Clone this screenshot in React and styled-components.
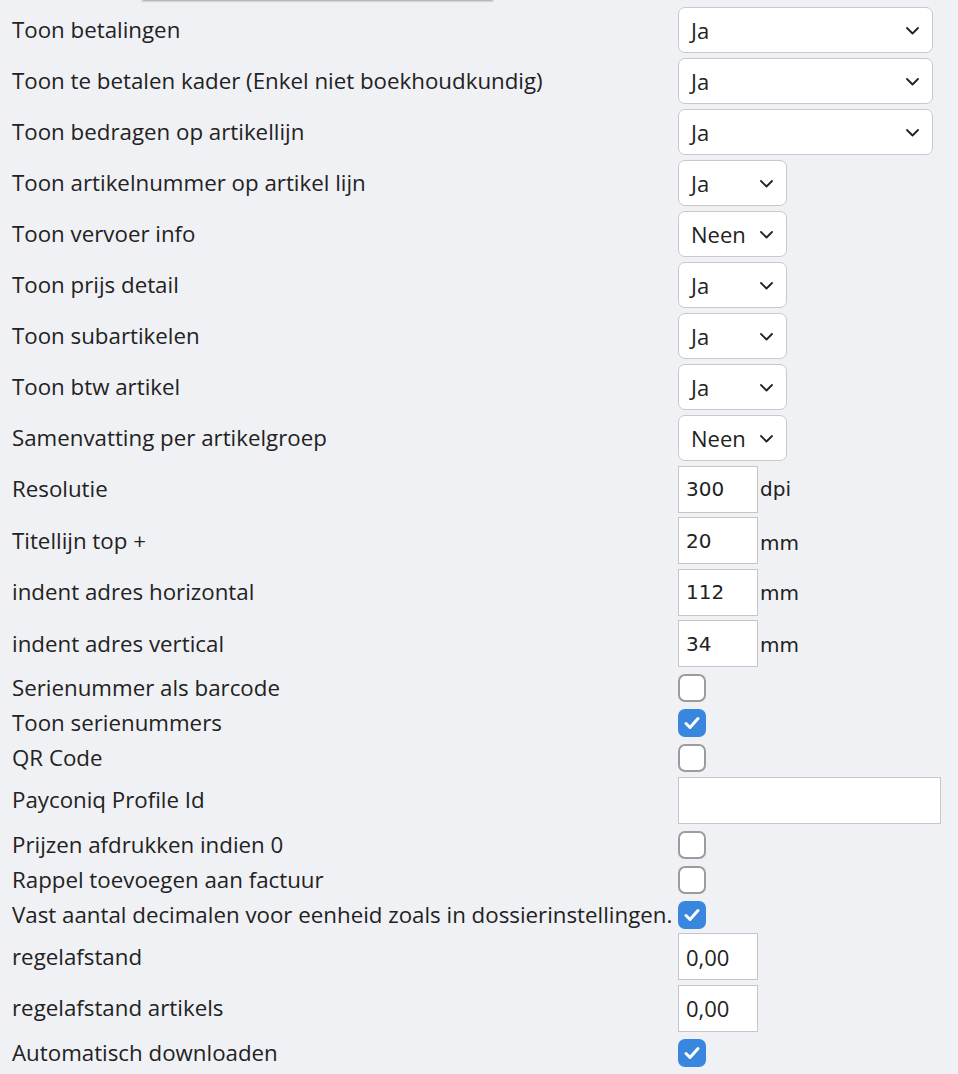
import React from 'react';
import styled, { createGlobalStyle } from 'styled-components';

const GlobalStyle = createGlobalStyle`
  html, body {
    margin: 0;
    padding: 0;
    background: #f0f1f5;
  }
  body {
    font-family: "Open Sans", "Noto Sans", sans-serif;
    color: #222;
  }
`;

const Page = styled.div`
  position: relative;
  width: 958px;
  height: 1074px;
  overflow: hidden;
`;

const TopSheet = styled.div`
  position: absolute;
  top: -12px;
  left: 142px;
  width: 351px;
  height: 12px;
  background: #fff;
  box-shadow: 0 1px 2px rgba(0, 0, 0, 0.35);
`;

const Form = styled.div`
  padding-top: 2px;
`;

const Row = styled.div`
  display: grid;
  grid-template-columns: 666px auto;
  align-items: center;
  padding-top: ${p => p.$top}px;
  padding-left: 12px;
`;

const Label = styled.div`
  font-size: 22.3px;
  line-height: 26px;
  white-space: nowrap;
`;

const Control = styled.div`
  display: flex;
  align-items: center;
`;

const SelectBox = styled.div`
  position: relative;
  width: ${p => p.$width}px;
  height: 46px;
  box-sizing: border-box;
  background: #fff;
  border: 1px solid #c8c9cc;
  border-radius: 7px;
  display: flex;
  align-items: center;
  padding-left: 12px;
  font-size: 22px;
  color: #222;
`;

const Chevron = styled.svg`
  position: absolute;
  right: 13px;
  top: 19px;
  pointer-events: none;
`;

const TextInput = styled.div`
  width: ${p => p.$width}px;
  height: 47px;
  box-sizing: border-box;
  background: #fff;
  border: 1px solid #c6c6c8;
  display: flex;
  align-items: center;
  padding-left: 7px;
  font-size: ${p => (p.$dejavu ? 20 : 22)}px;
  font-family: ${p => (p.$dejavu ? '"DejaVu Sans", sans-serif' : '"Open Sans", sans-serif')};
  color: #222;
`;

const Unit = styled.span`
  font-family: "DejaVu Sans", sans-serif;
  font-size: 20px;
  margin-left: 2px;
  margin-top: ${p => p.$drop || 0}px;
`;

const Box = styled.div`
  width: 28px;
  height: 28px;
  box-sizing: border-box;
  border-radius: 7px;
  border: ${p => (p.$checked ? 'none' : '2px solid #9c9c9e')};
  background: ${p => (p.$checked ? '#3886dd' : '#fff')};
  display: flex;
  align-items: center;
  justify-content: center;
`;

function Select({ value, width }) {
  return (
    <SelectBox $width={width}>
      {value}
      <Chevron width="13" height="8" viewBox="0 0 13 8">
        <path d="M1 1 L6.5 6.5 L12 1" fill="none" stroke="#222" strokeWidth="1.8" strokeLinecap="round" strokeLinejoin="round" />
      </Chevron>
    </SelectBox>
  );
}

function Check({ checked }) {
  return (
    <Box $checked={checked}>
      {checked && (
        <svg width="16" height="14" viewBox="0 0 16 14">
          <path d="M2 7.5 L6 11.5 L14 2.5" fill="none" stroke="#fff" strokeWidth="3" strokeLinecap="round" strokeLinejoin="round" />
        </svg>
      )}
    </Box>
  );
}

const selects = [
  ['Toon betalingen', 'Ja', 255],
  ['Toon te betalen kader (Enkel niet boekhoudkundig)', 'Ja', 255],
  ['Toon bedragen op artikellijn', 'Ja', 255],
  ['Toon artikelnummer op artikel lijn', 'Ja', 109],
  ['Toon vervoer info', 'Neen', 109],
  ['Toon prijs detail', 'Ja', 109],
  ['Toon subartikelen', 'Ja', 109],
  ['Toon btw artikel', 'Ja', 109],
  ['Samenvatting per artikelgroep', 'Neen', 109],
];

const numbers = [
  ['Resolutie', '300', 'dpi', 0],
  ['Titellijn top +', '20', 'mm', 5],
  ['indent adres horizontal', '112', 'mm', 2],
  ['indent adres vertical', '34', 'mm', 2],
];

export default function App() {
  return (
    <Page>
      <GlobalStyle />
      <TopSheet />
      <Form>
        {selects.map(([label, value, width]) => (
          <Row key={label} $top={5}>
            <Label>{label}</Label>
            <Control>
              <Select value={value} width={width} />
            </Control>
          </Row>
        ))}
        {numbers.map(([label, value, unit, drop]) => (
          <Row key={label} $top={4.5}>
            <Label>{label}</Label>
            <Control>
              <TextInput $width={80} $dejavu>{value}</TextInput>
              <Unit $drop={drop}>{unit}</Unit>
            </Control>
          </Row>
        ))}
        <Row $top={7}>
          <Label>Serienummer als barcode</Label>
          <Control><Check /></Control>
        </Row>
        <Row $top={7}>
          <Label>Toon serienummers</Label>
          <Control><Check checked /></Control>
        </Row>
        <Row $top={7}>
          <Label>QR Code</Label>
          <Control><Check /></Control>
        </Row>
        <Row $top={4.5}>
          <Label>Payconiq Profile Id</Label>
          <Control><TextInput $width={263} /></Control>
        </Row>
        <Row $top={7}>
          <Label>Prijzen afdrukken indien 0</Label>
          <Control><Check /></Control>
        </Row>
        <Row $top={7}>
          <Label>Rappel toevoegen aan factuur</Label>
          <Control><Check /></Control>
        </Row>
        <Row $top={7}>
          <Label>Vast aantal decimalen voor eenheid zoals in dossierinstellingen.</Label>
          <Control><Check checked /></Control>
        </Row>
        <Row $top={4.5}>
          <Label>regelafstand</Label>
          <Control><TextInput $width={80}>0,00</TextInput></Control>
        </Row>
        <Row $top={4.5}>
          <Label>regelafstand artikels</Label>
          <Control><TextInput $width={80}>0,00</TextInput></Control>
        </Row>
        <Row $top={7}>
          <Label>Automatisch downloaden</Label>
          <Control><Check checked /></Control>
        </Row>
      </Form>
    </Page>
  );
}
